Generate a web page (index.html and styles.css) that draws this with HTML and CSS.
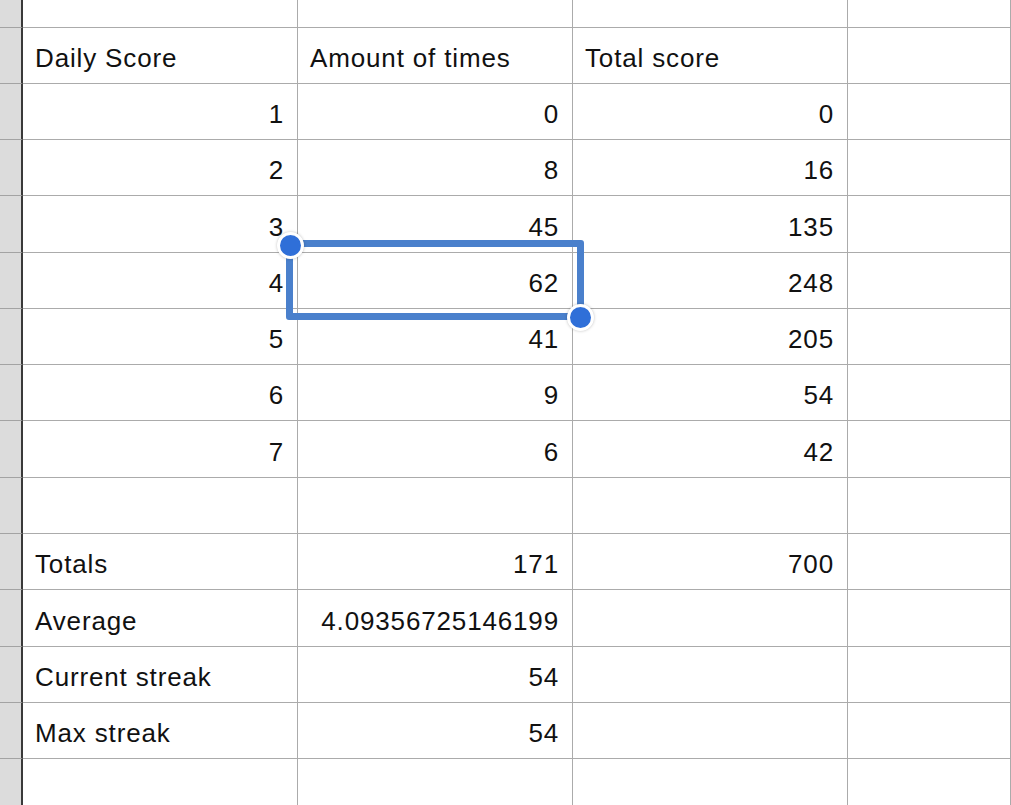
FILE: index.html
```html
<!DOCTYPE html>
<html>
<head>
<meta charset="utf-8">
<link rel="stylesheet" href="styles.css">
</head>
<body>
<div class="sheet">
  <div class="grid">
    <div class="rh"></div><div class="c"></div><div class="c"></div><div class="c"></div><div class="c"></div>
    <div class="rh"></div><div class="c l">Daily Score</div><div class="c l">Amount of times</div><div class="c l">Total score</div><div class="c"></div>
    <div class="rh"></div><div class="c r">1</div><div class="c r">0</div><div class="c r">0</div><div class="c"></div>
    <div class="rh"></div><div class="c r">2</div><div class="c r">8</div><div class="c r">16</div><div class="c"></div>
    <div class="rh"></div><div class="c r">3</div><div class="c r">45</div><div class="c r">135</div><div class="c"></div>
    <div class="rh"></div><div class="c r">4</div><div class="c r">62</div><div class="c r">248</div><div class="c"></div>
    <div class="rh"></div><div class="c r">5</div><div class="c r">41</div><div class="c r">205</div><div class="c"></div>
    <div class="rh"></div><div class="c r">6</div><div class="c r">9</div><div class="c r">54</div><div class="c"></div>
    <div class="rh"></div><div class="c r">7</div><div class="c r">6</div><div class="c r">42</div><div class="c"></div>
    <div class="rh"></div><div class="c"></div><div class="c"></div><div class="c"></div><div class="c"></div>
    <div class="rh"></div><div class="c l">Totals</div><div class="c r">171</div><div class="c r">700</div><div class="c"></div>
    <div class="rh"></div><div class="c l">Average</div><div class="c r">4.09356725146199</div><div class="c"></div><div class="c"></div>
    <div class="rh"></div><div class="c l">Current streak</div><div class="c r">54</div><div class="c"></div><div class="c"></div>
    <div class="rh"></div><div class="c l">Max streak</div><div class="c r">54</div><div class="c"></div><div class="c"></div>
    <div class="rh last"></div><div class="c last"></div><div class="c last"></div><div class="c last"></div><div class="c last"></div>
  </div>
  <div class="selection"></div>
  <div class="handle handle-tl"></div>
  <div class="handle handle-br"></div>
</div>
</body>
</html>
```

FILE: styles.css
```css
html, body {
  margin: 0;
  padding: 0;
  background: #ffffff;
}
body {
  width: 1011px;
  height: 805px;
  overflow: hidden;
  font-family: "Liberation Sans", Arial, Helvetica, sans-serif;
  color: #111111;
}
.sheet {
  position: relative;
  width: 1011px;
  height: 805px;
  overflow: hidden;
}
.grid {
  display: grid;
  grid-template-columns: 23px 275px 275px 275px 1fr;
  grid-template-rows: 28px 56px 56px 56px 57px 56px 56px 56px 57px 56px 56px 57px 56px 56px 1fr;
  width: 1011px;
  height: 805px;
}
.rh {
  background: #dcdcdc;
  border-right: 2px solid #3a3a3a;
  border-bottom: 1px solid #a3a3a3;
}
.c {
  border-right: 1px solid #ababab;
  border-bottom: 1px solid #ababab;
  display: flex;
  align-items: center;
  padding: 6px 13px 0 12px;
  font-size: 26px;
  letter-spacing: 0.85px;
  white-space: nowrap;
  overflow: visible;
}
.c.r {
  justify-content: flex-end;
}
.last {
  border-bottom: none;
}
.selection {
  position: absolute;
  left: 286px;
  top: 240px;
  width: 284px;
  height: 66px;
  border: 7px solid #4a80cc;
  border-radius: 3px;
}
.handle {
  position: absolute;
  width: 21px;
  height: 21px;
  border-radius: 50%;
  background: #2f6fd8;
  border: 3px solid #ffffff;
  box-shadow: 0 0 3px rgba(0, 0, 0, 0.25);
}
.handle-tl {
  left: 277px;
  top: 232px;
}
.handle-br {
  left: 567px;
  top: 304px;
}
```
